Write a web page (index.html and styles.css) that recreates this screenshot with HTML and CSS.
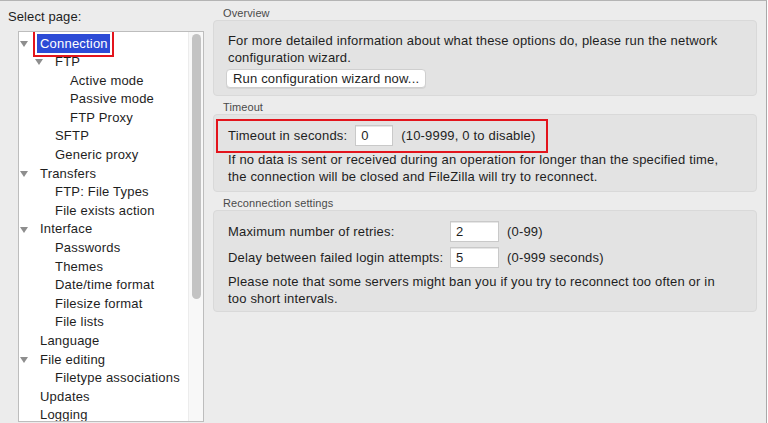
FILE: index.html
```html
<!DOCTYPE html>
<html>
<head>
<meta charset="utf-8">
<link rel="stylesheet" href="styles.css">
</head>
<body>
<div class="window">
  <aside class="sidebar">
    <div class="sel-label">Select page:</div>
    <div class="tree">
      <ul class="tree-list">
        <li class="row l0"><span class="slot"><span class="tri"></span></span><span class="item selected">Connection</span></li>
        <li class="row l1"><span class="slot"><span class="tri"></span></span><span class="item">FTP</span></li>
        <li class="row l2"><span class="slot"></span><span class="item">Active mode</span></li>
        <li class="row l2"><span class="slot"></span><span class="item">Passive mode</span></li>
        <li class="row l2"><span class="slot"></span><span class="item">FTP Proxy</span></li>
        <li class="row l1"><span class="slot"></span><span class="item">SFTP</span></li>
        <li class="row l1"><span class="slot"></span><span class="item">Generic proxy</span></li>
        <li class="row l0"><span class="slot"><span class="tri"></span></span><span class="item">Transfers</span></li>
        <li class="row l1"><span class="slot"></span><span class="item">FTP: File Types</span></li>
        <li class="row l1"><span class="slot"></span><span class="item">File exists action</span></li>
        <li class="row l0"><span class="slot"><span class="tri"></span></span><span class="item">Interface</span></li>
        <li class="row l1"><span class="slot"></span><span class="item">Passwords</span></li>
        <li class="row l1"><span class="slot"></span><span class="item">Themes</span></li>
        <li class="row l1"><span class="slot"></span><span class="item">Date/time format</span></li>
        <li class="row l1"><span class="slot"></span><span class="item">Filesize format</span></li>
        <li class="row l1"><span class="slot"></span><span class="item">File lists</span></li>
        <li class="row l0"><span class="slot"></span><span class="item">Language</span></li>
        <li class="row l0"><span class="slot"><span class="tri"></span></span><span class="item">File editing</span></li>
        <li class="row l1"><span class="slot"></span><span class="item">Filetype associations</span></li>
        <li class="row l0"><span class="slot"></span><span class="item">Updates</span></li>
        <li class="row l0"><span class="slot"></span><span class="item">Logging</span></li>
      </ul>
      <div class="scrollbar"><div class="thumb"></div></div>
    </div>
  </aside>

  <main class="main">
    <div class="group-label">Overview</div>
    <section class="group overview">
      <p class="para">For more detailed information about what these options do, please run the network<br>configuration wizard.</p>
      <button class="btn">Run configuration wizard now...</button>
    </section>

    <div class="group-label">Timeout</div>
    <section class="group timeout">
      <div class="highlight-row">
        <span class="lbl">Timeout in seconds:</span>
        <span class="field f-timeout">0</span>
        <span class="hint">(10-9999, 0 to disable)</span>
      </div>
      <p class="para">If no data is sent or received during an operation for longer than the specified time,<br>the connection will be closed and FileZilla will try to reconnect.</p>
    </section>

    <div class="group-label">Reconnection settings</div>
    <section class="group reconnect">
      <div class="form-grid">
        <span class="lbl">Maximum number of retries:</span>
        <span class="field f-num">2</span>
        <span class="hint">(0-99)</span>
        <span class="lbl">Delay between failed login attempts:</span>
        <span class="field f-num">5</span>
        <span class="hint">(0-999 seconds)</span>
      </div>
      <p class="para">Please note that some servers might ban you if you try to reconnect too often or in<br>too short intervals.</p>
    </section>
  </main>
</div>
</body>
</html>
```

FILE: styles.css
```css
* { box-sizing: border-box; }

html, body {
  margin: 0;
  padding: 0;
  width: 768px;
  height: 423px;
  overflow: hidden;
  background: #ffffff;
}

body {
  font-family: "Liberation Sans", Arial, sans-serif;
  font-size: 13px;
  letter-spacing: 0.18px;
  color: #1e1e1e;
}

.window {
  width: 767px;
  height: 423px;
  background: #ececec;
  border-top: 1px solid #b4b4b4;
  border-right: 1px solid #a9a9a9;
  display: flex;
  overflow: hidden;
}

/* ---------- sidebar ---------- */
.sidebar {
  width: 204px;
  flex: none;
  display: flex;
  flex-direction: column;
}

.sel-label {
  padding: 8px 0 0 8px;
  line-height: 16px;
  height: 30px;
  letter-spacing: 0.1px;
}

.tree {
  position: relative;
  margin-left: 18px;
  width: 186px;
  height: 391px;
  background: #ffffff;
  border: 1px solid #bdbdbd;
  overflow: hidden;
}

.tree-list {
  list-style: none;
  margin: 0;
  padding: 2.5px 0 0 0;
}

.row {
  display: flex;
  align-items: center;
  height: 18.6px;
  line-height: 18.6px;
  white-space: nowrap;
  letter-spacing: 0.2px;
}

.row.l1 { padding-left: 15px; }
.row.l2 { padding-left: 30px; }

.slot {
  width: 21px;
  flex: none;
  display: flex;
  align-items: center;
}

.tri {
  display: block;
  margin-left: 1px;
  width: 0;
  height: 0;
  border-left: 4px solid transparent;
  border-right: 4px solid transparent;
  border-top: 6px solid #8e8e8e;
}

.item.selected {
  margin-left: -3px;
  padding: 0 2px 0 3px;
  line-height: 19px;
  background: #2c4bd6;
  color: #ffffff;
  outline: 2px solid #e3141c;
  outline-offset: 2px;
}

.scrollbar {
  position: absolute;
  top: 0;
  right: 0;
  width: 15px;
  height: 100%;
  background: #f8f8f8;
  border-left: 1px solid #ececec;
}

.thumb {
  margin: 2px 0 0 3px;
  width: 9px;
  height: 265px;
  border-radius: 5px;
  background: #c3c3c3;
}

/* ---------- main ---------- */
.main {
  flex: 1;
  padding: 0 9px 0 9px;
  display: flex;
  flex-direction: column;
}

.group-label {
  font-size: 11px;
  line-height: 14px;
  padding: 4px 0 0 10px;
  color: #4a4a4a;
  letter-spacing: 0.1px;
}

.main .group-label:first-child {
  padding-top: 5px;
}

.group {
  background: #e3e3e3;
  border: 1px solid #d9d9d9;
  border-radius: 4px;
  padding: 0 14px;
}

.para {
  margin: 0;
  line-height: 17px;
  white-space: nowrap;
}

.overview {
  padding-top: 11px;
  padding-bottom: 7px;
}

.btn {
  display: block;
  margin: 3px 0 0 -2px;
  height: 19px;
  width: 200px;
  padding: 0 0 0 6px;
  text-align: left;
  font-family: inherit;
  font-size: 13px;
  letter-spacing: 0.18px;
  color: #1e1e1e;
  background: #ffffff;
  border: 1px solid #cfcfcf;
  border-radius: 4px;
  box-shadow: 0 1px 0 rgba(0,0,0,0.06);
}

.timeout {
  padding-top: 4px;
  padding-bottom: 6px;
}

.highlight-row {
  display: inline-flex;
  align-items: center;
  gap: 8px;
  margin-left: -12px;
  margin-bottom: -2px;
  padding: 4px 10px 5px 10px;
  border: 2px solid #e3141c;
  white-space: nowrap;
}

.field {
  display: block;
  height: 21px;
  line-height: 20px;
  padding: 0 5px;
  background: #ffffff;
  border: 1px solid #c9c9c9;
  box-shadow: inset 0 1px 0 #e6e6e6;
}

.f-timeout { width: 38px; }
.f-num { width: 49px; }

.reconnect {
  padding-top: 10px;
  padding-bottom: 4px;
}

.form-grid {
  display: grid;
  grid-template-columns: 214px 49px auto;
  column-gap: 8px;
  row-gap: 5px;
  align-items: center;
  white-space: nowrap;
  margin-bottom: 5px;
}
```
